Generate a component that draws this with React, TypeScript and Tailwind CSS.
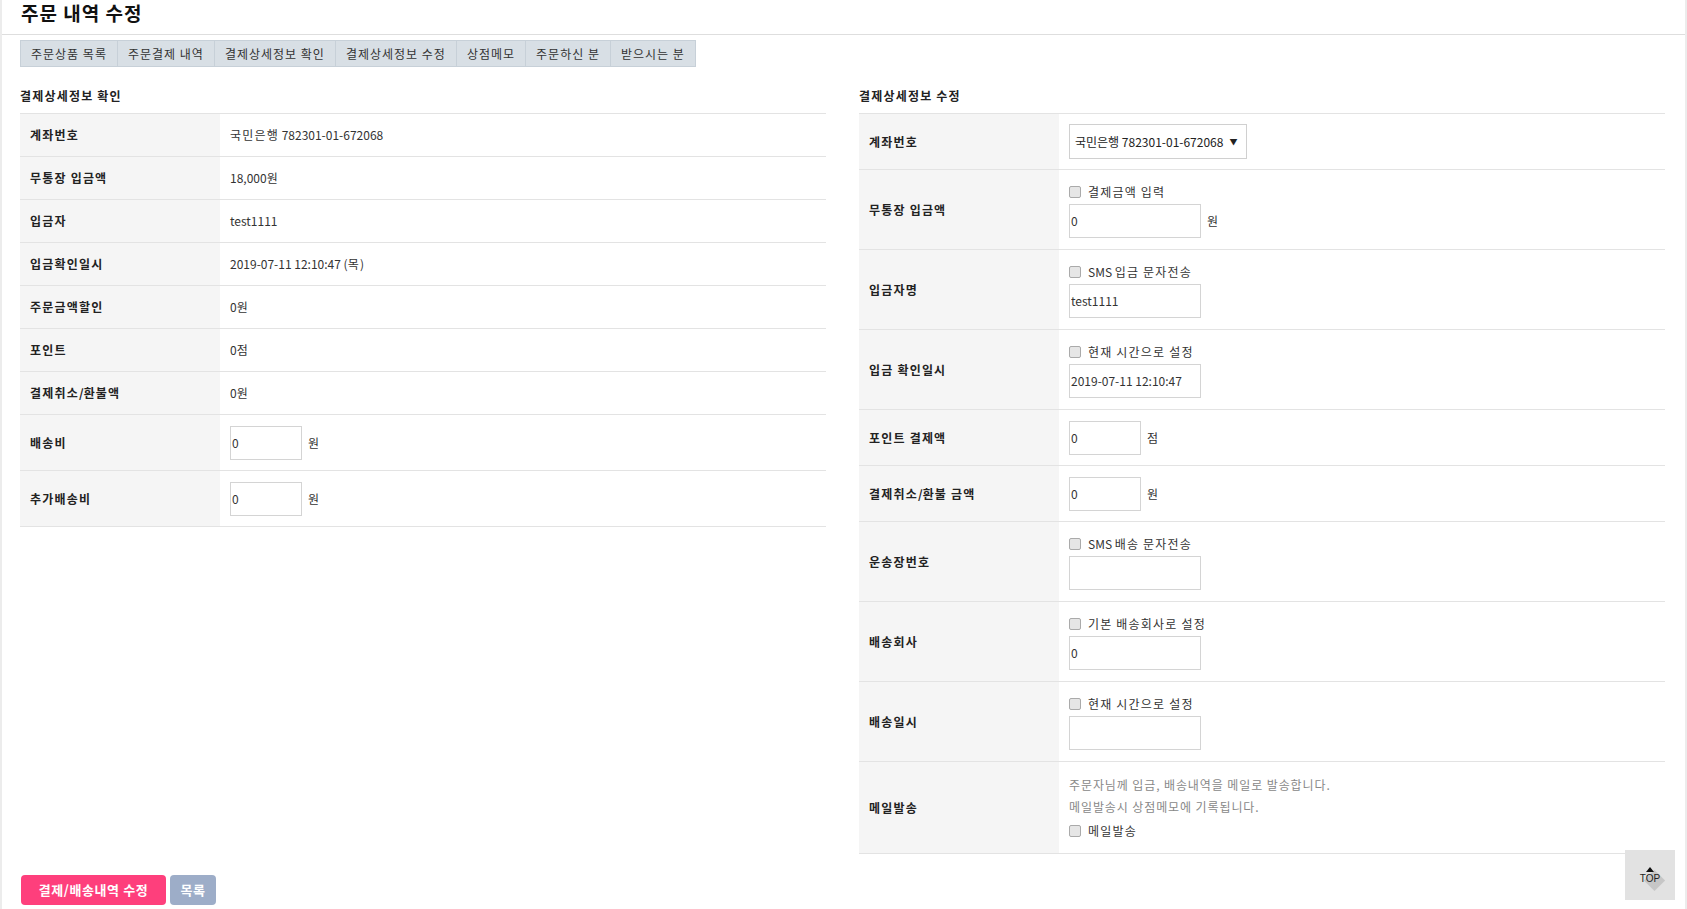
import type { ReactNode } from 'react';

const tabs = ['주문상품 목록', '주문결제 내역', '결제상세정보 확인', '결제상세정보 수정', '상점메모', '주문하신 분', '받으시는 분'];

const infoRows = [
  ['계좌번호', '국민은행 782301-01-672068'],
  ['무통장 입금액', '18,000원'],
  ['입금자', 'test1111'],
  ['입금확인일시', '2019-07-11 12:10:47 (목)'],
  ['주문금액할인', '0원'],
  ['포인트', '0점'],
  ['결제취소/환불액', '0원'],
];

// hangul runs get a bit of spacing, the reference font sets them wider
function Ko({ text }: { text: string }) {
  const parts = text.split(/([가-힣]+(?:\s+[가-힣]+)*)/);
  return (
    <>
      {parts.map((p, i) =>
        /[가-힣]/.test(p) ? (
          <span key={i} className="tracking-[1.2px]">
            {p}
          </span>
        ) : (
          p
        ),
      )}
    </>
  );
}

function Row({ label, height, children }: { label: string; height: string; children: ReactNode }) {
  return (
    <div className={`flex border-b border-[#e3e3e3] ${height}`}>
      <div className="flex w-[200px] shrink-0 items-center bg-[#f5f5f5] px-[10px] font-bold text-[#222]">
        <Ko text={label} />
      </div>
      <div className="flex flex-1 flex-col justify-center px-[10px] text-[#333]">{children}</div>
    </div>
  );
}

function Check({ label }: { label: string }) {
  return (
    <label className="flex h-[20px] items-center gap-[7px] text-[#333]">
      <span className="h-[12px] w-[12px] rounded-[2px] border border-[#aaaaaa] bg-[#e6e6e6]" />
      <span>
        <Ko text={label} />
      </span>
    </label>
  );
}

function Field({ value = '', wide, unit }: { value?: string; wide?: boolean; unit?: string }) {
  return (
    <div className="flex items-center gap-[6px]">
      <input
        readOnly
        value={value}
        className={[
          'h-[34px] border border-[#d4d4d4] bg-white px-[1px] text-[12px] text-[#333] outline-none',
          wide ? 'w-[132px]' : 'w-[72px]',
        ].join(' ')}
      />
      {unit ? <span className="text-[#333]">{unit}</span> : null}
    </div>
  );
}

export default function App() {
  return (
    <div className="relative h-screen overflow-hidden border-x-2 border-[#ececec] bg-white font-['Noto_Sans_CJK_KR','Noto_Sans',sans-serif] text-[12px] leading-[18px]">
      <header className="h-[35px] border-b border-[#dedede] px-[19px]">
        <h1 className="pt-[1px] text-[19px] font-bold leading-[24px] tracking-[1px] text-[#111]">주문 내역 수정</h1>
      </header>

      <div className="pl-[18px] pr-[20px]">
        <nav className="mt-[5px] flex w-fit border border-[#c7d0d8] bg-[#d8dfe5]">
          {tabs.map((tab, i) => (
            <div
              key={tab}
              className={[
                'h-[25px] px-[10px] leading-[25px] tracking-[1px] text-[#333]',
                i < tabs.length - 1 ? 'border-r border-[#c7d0d8]' : '',
              ].join(' ')}
            >
              {tab}
            </div>
          ))}
        </nav>

        <div className="mt-[20px] grid grid-cols-2 gap-x-[33px]">
          <section>
            <h2 className="mb-[8px] h-[18px] font-bold tracking-[1.2px] text-[#222]">결제상세정보 확인</h2>
            <div className="border-t border-[#e3e3e3]">
              {infoRows.map(([label, value]) => (
                <Row key={label} label={label} height="h-[43px]">
                  <span>
                    <Ko text={value} />
                  </span>
                </Row>
              ))}
              <Row label="배송비" height="h-[56px]">
                <Field value="0" unit="원" />
              </Row>
              <Row label="추가배송비" height="h-[56px]">
                <Field value="0" unit="원" />
              </Row>
            </div>
          </section>

          <section>
            <h2 className="mb-[8px] h-[18px] font-bold tracking-[1.2px] text-[#222]">결제상세정보 수정</h2>
            <div className="border-t border-[#e3e3e3]">
              <Row label="계좌번호" height="h-[56px]">
                <div className="flex h-[35px] w-[178px] items-center gap-[6px] border border-[#d0d0d0] pl-[5px] text-[#222]">
                  <span>국민은행 782301-01-672068</span>
                  <span className="text-[8px]">▼</span>
                </div>
              </Row>
              <Row label="무통장 입금액" height="h-[80px]">
                <Check label="결제금액 입력" />
                <div className="mt-[2px]">
                  <Field value="0" wide unit="원" />
                </div>
              </Row>
              <Row label="입금자명" height="h-[80px]">
                <Check label="SMS 입금 문자전송" />
                <div className="mt-[2px]">
                  <Field value="test1111" wide />
                </div>
              </Row>
              <Row label="입금 확인일시" height="h-[80px]">
                <Check label="현재 시간으로 설정" />
                <div className="mt-[2px]">
                  <Field value="2019-07-11 12:10:47" wide />
                </div>
              </Row>
              <Row label="포인트 결제액" height="h-[56px]">
                <Field value="0" unit="점" />
              </Row>
              <Row label="결제취소/환불 금액" height="h-[56px]">
                <Field value="0" unit="원" />
              </Row>
              <Row label="운송장번호" height="h-[80px]">
                <Check label="SMS 배송 문자전송" />
                <div className="mt-[2px]">
                  <Field wide />
                </div>
              </Row>
              <Row label="배송회사" height="h-[80px]">
                <Check label="기본 배송회사로 설정" />
                <div className="mt-[2px]">
                  <Field value="0" wide />
                </div>
              </Row>
              <Row label="배송일시" height="h-[80px]">
                <Check label="현재 시간으로 설정" />
                <div className="mt-[2px]">
                  <Field wide />
                </div>
              </Row>
              <Row label="메일발송" height="h-[92px]">
                <p className="leading-[22px] tracking-[0.9px] text-[#888]">주문자님께 입금, 배송내역을 메일로 발송합니다.</p>
                <p className="leading-[22px] tracking-[0.9px] text-[#888]">메일발송시 상점메모에 기록됩니다.</p>
                <div className="mt-[3px]">
                  <Check label="메일발송" />
                </div>
              </Row>
            </div>
          </section>
        </div>

        <div className="mt-[21px] flex gap-[4px] pl-[1px]">
          <button
            type="button"
            className="h-[30px] w-[145px] rounded-[4px] bg-[#fe3f7c] text-[13px] font-bold tracking-[0.6px] text-white"
          >
            결제/배송내역 수정
          </button>
          <button
            type="button"
            className="h-[30px] w-[46px] rounded-[4px] bg-[#9dadc8] text-[13px] font-bold tracking-[0.6px] text-white"
          >
            목록
          </button>
        </div>
      </div>

      <div className="absolute bottom-[9px] right-[10px] flex h-[50px] w-[50px] flex-col items-center overflow-hidden bg-[#e2e2e2]">
        <div className="absolute left-[22px] top-[23px] h-[15px] w-[15px] rotate-45 bg-[#c6c6c6]" />
        <svg className="relative mt-[17px]" width="8" height="5" viewBox="0 0 8 5">
          <path d="M0 5 L4 0 L8 5 Z" fill="#111" />
        </svg>
        <span className="relative mt-[1px] font-['Liberation_Sans',sans-serif] text-[10px] leading-[11px] text-[#222]">TOP</span>
      </div>
    </div>
  );
}
